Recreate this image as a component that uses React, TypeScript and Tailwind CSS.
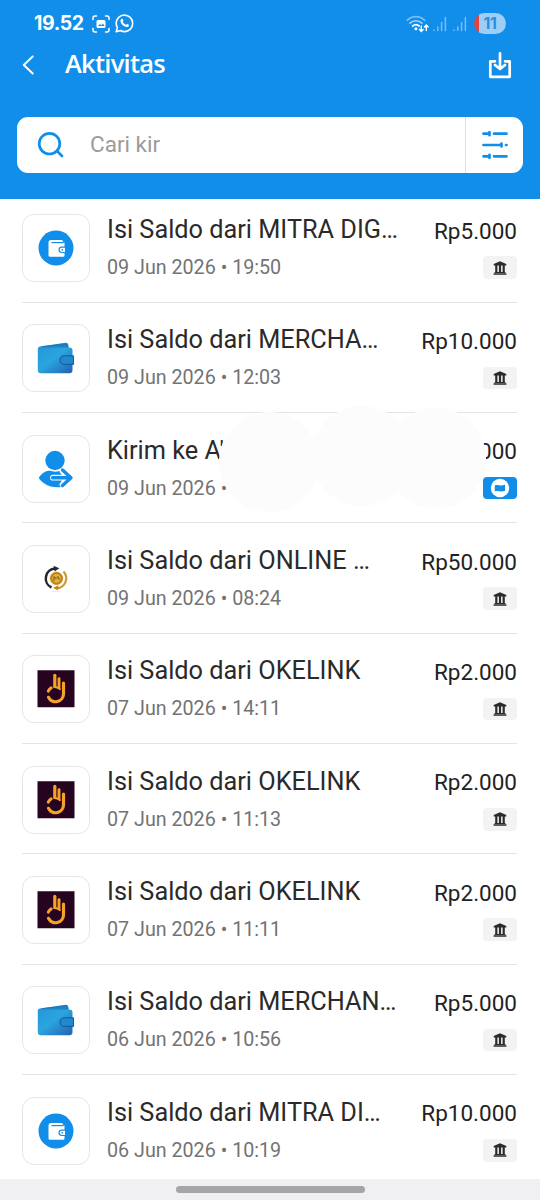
import { clsx } from "clsx"

type IconKind = "walletCircle" | "wallet" | "send" | "coin" | "okelink"

type Transaction = {
  icon: IconKind
  title: string
  date: string
  amount: string
  badge?: "dana"
}

const transactions: Transaction[] = [
  { icon: "walletCircle", title: "Isi Saldo dari MITRA DIG…", date: "09 Jun 2026 • 19:50", amount: "Rp5.000" },
  { icon: "wallet", title: "Isi Saldo dari MERCHA…", date: "09 Jun 2026 • 12:03", amount: "Rp10.000" },
  { icon: "send", title: "Kirim ke A'", date: "09 Jun 2026 •", amount: "000", badge: "dana" },
  { icon: "coin", title: "Isi Saldo dari ONLINE …", date: "09 Jun 2026 • 08:24", amount: "Rp50.000" },
  { icon: "okelink", title: "Isi Saldo dari OKELINK", date: "07 Jun 2026 • 14:11", amount: "Rp2.000" },
  { icon: "okelink", title: "Isi Saldo dari OKELINK", date: "07 Jun 2026 • 11:13", amount: "Rp2.000" },
  { icon: "okelink", title: "Isi Saldo dari OKELINK", date: "07 Jun 2026 • 11:11", amount: "Rp2.000" },
  { icon: "wallet", title: "Isi Saldo dari MERCHAN…", date: "06 Jun 2026 • 10:56", amount: "Rp5.000" },
  { icon: "walletCircle", title: "Isi Saldo dari MITRA DI…", date: "06 Jun 2026 • 10:19", amount: "Rp10.000" },
]

function TransactionIcon({ kind }: { kind: IconKind }) {
  switch (kind) {
    case "walletCircle":
      return (
        <svg className="w-[68px] h-[68px] shrink-0" viewBox="0 0 68 68">
          <circle cx="34" cy="34" r="17.5" fill="#118eea" />
          <path d="M29 26h10.500a1.500 1.500 0 0 1 1.500 1.500v1h1.500v13a1.200 1.200 0 0 1-1.200 1.200H28a1.500 1.500 0 0 1-1.500-1.500V28.500a2.500 2.500 0 0 1 2.500-2.500z" fill="#fff" />
          <path d="M29.500 28.600H41.500" stroke="#118eea" strokeWidth="1.200" />
          <path d="M43 33.100h-3.200a2.700 2.700 0 0 0 0 5.400H43" fill="#fff" stroke="#118eea" strokeWidth="1.200" />
          <circle cx="40.300" cy="35.800" r=".9" fill="#118eea" />
        </svg>
      )
    case "wallet":
      return (
        <svg className="w-[68px] h-[68px] shrink-0" viewBox="0 0 68 68">
          <defs>
            <linearGradient id="walletFill" x1="0" y1="0" x2="1" y2="1">
              <stop offset="0" stopColor="#2497d8" />
              <stop offset=".45" stopColor="#2aa5e0" />
              <stop offset="1" stopColor="#2560ae" />
            </linearGradient>
          </defs>
          <path d="M18 22.500 43.500 18.700a2.500 2.500 0 0 1 2.800 2.100l.7 5H18z" fill="#1f84c8" />
          <path d="M20 22.600 43 20.300a2 2 0 0 1 2 1.500l.5 3" fill="none" stroke="#1873b5" strokeWidth=".7" />
          <path d="M17.500 22.500l2 1H47.500a3 3 0 0 1 3 3V46a3.200 3.200 0 0 1-3.200 3.200H19A3.200 3.200 0 0 1 15.800 46V25a2.500 2.500 0 0 1 1.700-2.500z" fill="url(#walletFill)" />
          <path d="M51.500 31.800h-9.300a4.100 4.100 0 0 0-4.100 4.100v.4a4.100 4.100 0 0 0 4.100 4.100h9.300z" fill="#2188cf" stroke="#13589a" strokeWidth="1" strokeLinejoin="round" />
        </svg>
      )
    case "send":
      return (
        <svg className="w-[68px] h-[68px] shrink-0" viewBox="0 0 68 68">
          <g fill="#118eea">
            <circle cx="33" cy="25.500" r="9.700" />
            <path d="M16.800 43c2.500-4.500 6.500-7.200 11-7.200 2 0 3.200.9 5.500.9l6.200-1V52c-9.500 1.200-18-2-22.700-9z" />
          </g>
          <path d="M31 42.700H48M40.500 36l8 6.700-8 7" fill="none" stroke="#fff" strokeWidth="5.800" strokeLinecap="round" strokeLinejoin="round" />
          <path d="M30.500 42.700H48M40.500 35l8.500 7.700-8.500 7.800" fill="none" stroke="#118eea" strokeWidth="3.400" strokeLinecap="round" strokeLinejoin="round" />
        </svg>
      )
    case "coin":
      return (
        <svg className="w-[68px] h-[68px] shrink-0" viewBox="0 0 68 68">
          <path d="M29.500 42.500A10 10 0 0 1 33 23.500" fill="none" stroke="#222732" strokeWidth="2.500" />
          <path d="M31.500 20.800l5.800 2.400-4.600 3.200z" fill="#222732" />
          <path d="M41.500 26.500A10 10 0 0 1 35 43.300" fill="none" stroke="#cc9a36" strokeWidth="2.200" />
          <path d="M36.500 40.300l-5.500 2.800 5 2.200z" fill="#b98422" />
          <circle cx="34.500" cy="33.300" r="6.600" fill="#c88d1c" />
          <circle cx="34.500" cy="33.300" r="4.900" fill="#e1b03d" stroke="#9c6a12" strokeWidth=".6" />
          <path d="M32 36v-4.500l2 2.200 2-2.200 1.500 3.500" fill="none" stroke="#7c5410" strokeWidth="1" />
          <path d="M30 46.300h8" stroke="#f3dccb" strokeWidth=".8" />
        </svg>
      )
    case "okelink":
      return (
        <svg className="w-[68px] h-[68px] shrink-0" viewBox="0 0 68 68">
          <path d="M15.500 15.200h37v37h-37z" fill="#26041f" />
          <g fill="none" stroke="#f5a12b" strokeLinecap="round">
            <path d="M32.800 20.300V31.500" strokeWidth="3.200" />
            <path d="M37 23.800V32.500" strokeWidth="2.900" />
            <path d="M41.500 28V39a7.900 7.900 0 0 1-15 3.300" strokeWidth="3.200" />
            <path d="M26.300 36.200c.6-1.400 1.500-2.500 2.900-3.300" strokeWidth="3" />
            <path d="M32.500 32c2 0 3.800.7 5.300 2" strokeWidth="2.200" />
          </g>
        </svg>
      )
  }
}

function SourceBadge({ dana }: { dana: boolean }) {
  return (
    <div
      className={clsx(
        "w-[34px] h-[22.500px] rounded-[4px] flex items-center justify-center",
        dana ? "bg-[#118eea]" : "bg-[#f3f3f3]",
      )}
    >
      {dana ? (
        <svg className="w-5 h-5" viewBox="0 0 20 20">
          <circle cx="10" cy="10" r="9.200" fill="#fff" />
          <path d="M4.800 7.600c2.800-1.500 5.500 1 10.200-.9v6c-4.200 1.700-6.800-.5-10.200.8z" fill="#118eea" />
        </svg>
      ) : (
        <svg className="w-[14px] h-[14px]" viewBox="0 0 14 14" fill="#2b2b2b">
          <path d="M7 .3 13.300 3v1.400H.7V3zM2.200 4h2.200v7.500H2.200zM5.900 4h2.200v7.500H5.900zM9.600 4h2.200v7.500H9.600zM1.600 10.900h10.800v1H1.600zM.6 12.200h12.800v1.500H.6z" />
        </svg>
      )}
    </div>
  )
}

function TransactionRow({ item }: { item: Transaction }) {
  return (
    <div className="h-[110.350px] shrink-0 pt-[21.500px] flex border-b-[1.500px] border-[#e4e4e4]">
      <div className="w-[68px] h-[68px] shrink-0 rounded-xl border-[1.500px] border-[#e6e6e6] flex items-center justify-center">
        <TransactionIcon kind={item.icon} />
      </div>
      <div className="ml-[17px] flex-1 whitespace-nowrap">
        <div className="mt-px text-[25.300px] leading-[30px] text-[#2a2a2a]">{item.title}</div>
        <div className="mt-[11px] text-[19.700px] leading-6 text-[#737373]">{item.date}</div>
      </div>
      <div className="flex flex-col items-end">
        <div className="mt-[2.800px] text-[22.500px] leading-7 text-[#222]">{item.amount}</div>
        <div className="mt-[11.700px]">
          <SourceBadge dana={item.badge === "dana"} />
        </div>
      </div>
    </div>
  )
}

function Signal() {
  return (
    <svg className="w-[14px] h-4" viewBox="0 0 14 16" stroke="#78bdf3" strokeWidth="1.500" strokeLinecap="round">
      <path d="M1 14v.5M4.800 11v3.500M8.600 6.500v8M12.400 1.500v13" />
    </svg>
  )
}

function StatusBar() {
  return (
    <div className="h-[46px] pl-[34px] pr-[34px] flex items-center text-white">
      <span className="mt-[2px] w-[50px] font-['Inter','Roboto',sans-serif] font-bold text-[19.500px] tracking-[-0.4px]">19.52</span>
      <svg className="mt-px ml-[8px] w-[18px] h-[18px]" viewBox="0 0 18 18" fill="none" stroke="#fff" strokeWidth="1.500" strokeLinecap="round">
        <path d="M1 4.500V3a2 2 0 0 1 2-2h1.500M13.500 1H15a2 2 0 0 1 2 2v1.500M17 13.500V15a2 2 0 0 1-2 2h-1.500M4.500 17H3a2 2 0 0 1-2-2v-1.500" />
        <rect x="4.500" y="5" width="9" height="8" rx="1.500" fill="#fff" stroke="none" />
        <path d="M6 11l2-2 1.500 1.200L11 8.500l1.500 2.500z" fill="#118eea" stroke="none" />
      </svg>
      <svg className="mt-px ml-[5px] w-[19px] h-[19px]" viewBox="0 0 19 19" fill="none" stroke="#fff" strokeWidth="1.600">
        <path d="M1.200 17.800l1.200-4.300a8.200 8.200 0 1 1 3.100 3z" strokeLinejoin="round" />
        <path d="M6.200 5.100c.5-.6 1.300-.5 1.500 0l.7 1.500c.1.500-.7 1-.6 1.400.6 1.200 1.600 2.100 2.900 2.700.5.100 1-1 1.500-.8l1.500.8c.5.300.3 1.300-.2 1.800-2 2-8.600-2.200-8-6 .1-.5.300-1 .7-1.400z" fill="#fff" stroke="none" />
      </svg>
      <div className="ml-auto flex items-center">
        <svg className="mt-px w-[23px] h-[18px]" viewBox="0 0 23 18" fill="none" strokeLinecap="round">
          <path d="M1.200 5.300c5-4.900 12.500-4.900 17.500 0" stroke="#78bdf3" strokeWidth="1.700" />
          <path d="M4 8.200c3.400-3.300 8.500-3.300 11.900 0" stroke="#a7d4f8" strokeWidth="1.700" />
          <path d="M6.700 11c2-1.700 4.500-1.700 6.400 0" stroke="#fff" strokeWidth="1.800" />
          <circle cx="9.900" cy="13.700" r="1.500" fill="#fff" />
          <path d="M15.300 11v5M13.500 14.500l1.800 2 1.800-2M20.300 15.500v-5M18.500 12l1.800-2 1.800 2" stroke="#fff" strokeWidth="1.400" />
        </svg>
        <div className="mt-[2px] ml-[4px] flex gap-[6px]">
          <Signal />
          <Signal />
        </div>
        <div className="ml-[7px] w-8 h-[21px] rounded-full bg-linear-to-r from-[#e04444] from-[5.500px] to-[#9dcef7] to-[5.500px] flex items-center justify-center text-[16px] font-bold text-[#2b8fdf] font-['Inter','Roboto',sans-serif] tracking-[-0.5px]">
          11
        </div>
      </div>
    </div>
  )
}

export default function App() {
  return (
    <div className="w-[540px] h-[1200px] overflow-hidden bg-white flex flex-col font-['Roboto',sans-serif]">
      <header className="h-[198.500px] shrink-0 bg-[#118eea] z-10">
        <StatusBar />
        <div className="h-[38px] pl-[22px] pr-[28px] flex items-center">
          <svg className="w-3 h-5" viewBox="0 0 12 20" fill="none" stroke="#fff" strokeWidth="2" strokeLinecap="round" strokeLinejoin="round">
            <path d="M10.700 1.500 1.800 10l8.900 8.500" />
          </svg>
          <h1 className="ml-[31px] -mt-[4px] font-['Open_Sans',sans-serif] font-semibold text-[25.500px] leading-8 text-white tracking-[-0.75px]">Aktivitas</h1>
          <svg className="ml-auto w-6 h-7" viewBox="0 0 24 28" fill="none" stroke="#fff" strokeWidth="2.700" strokeLinecap="round" strokeLinejoin="round">
            <path d="M7 10.300H2.300v15.500h19.400V10.300H17M12 2.300V17.500M7 14l5 4 5-4" />
          </svg>
        </div>
        <div className="mt-[32.500px] mx-[17px] h-[56.500px] rounded-[11px] bg-white flex items-center">
          <svg className="ml-5 w-7 h-7" viewBox="0 0 28 28" fill="none" stroke="#118eea" strokeWidth="2.700" strokeLinecap="round">
            <circle cx="12.500" cy="12.700" r="10.300" />
            <path d="M20 20l5 5" />
          </svg>
          <span className="ml-[25px] text-[22.500px] text-[#9b9b9b]">Cari kir</span>
          <div className="ml-auto w-[58px] h-full border-l border-[#cfe3f2] flex items-center justify-center">
            <svg className="w-7 h-7" viewBox="0 0 28 28" fill="none" stroke="#118eea" strokeWidth="2.700" strokeLinecap="round">
              <path d="M2.500 2.700H7M8.500 1.200v3M13 2.700h12.500M2.500 14H19M20.500 12.500v3M25 14h.5M2.500 25.300H7M8.500 23.800v3M13 25.300h12.500" />
            </svg>
          </div>
        </div>
      </header>

      <main className="relative flex-1 min-h-0 overflow-hidden">
        <div className="-mt-[6.200px] pl-[22px] pr-[23px] flex flex-col">
          {transactions.map((item, i) => (
            <TransactionRow key={i} item={item} />
          ))}
        </div>
        {/* hides the recipient and the amount */}
        <div className="absolute left-[219px] top-[213.500px] w-[100px] h-[100px] rounded-full bg-[#fcfcfc]" />
        <div className="absolute left-[312px] top-[207px] w-[100px] h-[100px] rounded-full bg-[#fcfcfc]" />
        <div className="absolute left-[386px] top-[209px] w-[100px] h-[100px] rounded-full bg-[#fcfcfc]" />
      </main>

      <footer className="h-[21.500px] shrink-0 bg-[#f0f0f2] flex justify-center pt-[7.500px]">
        <div className="w-[189px] h-[6.500px] rounded-full bg-[#a5a5a7]" />
      </footer>
    </div>
  )
}
